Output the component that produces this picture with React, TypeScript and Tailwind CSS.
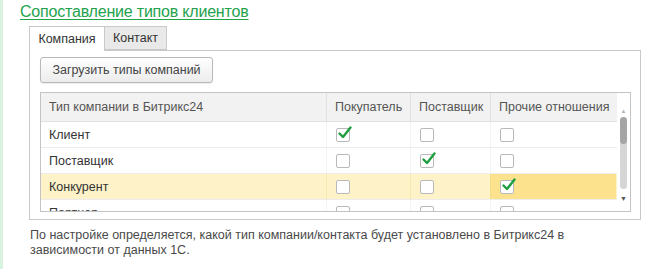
import React from "react";

type Row = { name: string; buyer: boolean; supplier: boolean; other: boolean; current?: boolean };

const rows: Row[] = [
  { name: "Клиент", buyer: true, supplier: false, other: false },
  { name: "Поставщик", buyer: false, supplier: true, other: false },
  { name: "Конкурент", buyer: false, supplier: false, other: true, current: true },
  { name: "Партнер", buyer: false, supplier: false, other: false },
];

function Check({ checked }: { checked: boolean }) {
  return (
    <div className="relative w-[14px] h-[14px] rounded-[2px] border border-[#b9b9b9] bg-white">
      {checked && (
        <svg className="absolute left-[0px] top-[-4px]" width="16" height="16" viewBox="0 0 16 16">
          <path d="M2.5 8.5 L6 12 L13.5 2.5" fill="none" stroke="#1f9e3f" strokeWidth="2.4" strokeLinecap="round" strokeLinejoin="round" />
        </svg>
      )}
    </div>
  );
}

export default function App() {
  return (
    <div className="w-[646px] h-[269px] bg-white flex overflow-hidden" style={{ fontFamily: '"Liberation Sans", Arial, sans-serif' }}>
      {/* left accent stripe */}
      <div className="w-[3px] h-full bg-[#d9f2e2]" />

      <div className="flex-1 pl-[17px] pt-[3px]">
        <div className="text-[16px] leading-[18px] text-[#23a24d] underline underline-offset-[2px] decoration-[#23a24d] tracking-[-0.2px]">
          Сопоставление типов клиентов
        </div>

        <div className="ml-[9px] mt-[5px] w-[612px]">
          {/* Tabs */}
          <div className="flex h-[24px] relative z-10">
            <div className="w-[76px] h-[25px] border border-[#c9c9c9] border-b-0 bg-white text-[12.5px] text-[#333] flex items-center justify-center">
              Компания
            </div>
            <div className="w-[62px] h-[24px] border border-[#c9c9c9] border-l-0 bg-[#e9e9e9] text-[12.5px] text-[#333] flex items-center justify-center">
              Контакт
            </div>
          </div>

          {/* Tab panel */}
          <div className="h-[170px] border border-[#c9c9c9] pl-[10px] pr-[9px] pt-[6px]">
            <button className="h-[26px] w-[173px] rounded-[3px] border border-[#b9b9b9] bg-gradient-to-b from-white to-[#ececec] text-[12.5px] text-[#444] shadow-[0_1px_1px_rgba(0,0,0,0.08)]">
              Загрузить типы компаний
            </button>

            {/* Table */}
            <div className="mt-[9px] h-[120px] border border-[#c4c4c4] flex overflow-hidden">
              <div className="flex-1 flex flex-col">
                <div className="grid grid-cols-[285px_84px_80px_126px] h-[29px] bg-[#f2f2f2] border-b border-[#e2e2e2] text-[12.5px] text-[#555] shrink-0">
                  <div className="pl-[8px] flex items-center">Тип компании в Битрикс24</div>
                  <div className="pl-[8px] flex items-center border-l border-[#e0e0e0]">Покупатель</div>
                  <div className="pl-[8px] flex items-center border-l border-[#e0e0e0]">Поставщик</div>
                  <div className="pl-[8px] flex items-center border-l border-[#e0e0e0]">Прочие отношения</div>
                </div>
                {rows.map((r) => (
                  <div
                    key={r.name}
                    className={`grid grid-cols-[285px_84px_80px_126px] h-[26px] shrink-0 border-b border-[#ececec] text-[12.5px] text-[#333] ${
                      r.current ? "bg-[#fdf2c8]" : "bg-white"
                    }`}
                  >
                    <div className="pl-[8px] flex items-center">{r.name}</div>
                    <div className={`pl-[9px] flex items-center border-l ${r.current ? "border-[#f7e7b0]" : "border-[#f3f3f3]"}`}>
                      <Check checked={r.buyer} />
                    </div>
                    <div className={`pl-[9px] flex items-center border-l ${r.current ? "border-[#f7e7b0]" : "border-[#f3f3f3]"}`}>
                      <Check checked={r.supplier} />
                    </div>
                    <div className={`pl-[9px] flex items-center border-l ${r.current ? "border-[#f5dc8a] bg-[#fde28e]" : "border-[#f3f3f3]"}`}>
                      <Check checked={r.other} />
                    </div>
                  </div>
                ))}
              </div>

              {/* Scrollbar */}
              <div className="w-[13px] flex flex-col items-center bg-white">
                <div className="h-[23px] flex items-end justify-center text-[6px] leading-none text-[#b5b5b5] pb-[2px]">▲</div>
                <div className="w-[7px] h-[72px] rounded-[4px] bg-[#d6d6d6] mt-[1px] relative">
                  <div className="absolute left-0 top-0 w-[7px] h-[27px] rounded-[4px] bg-[#a5a5a5]" />
                </div>
                <div className="mt-[6px] text-[7px] leading-none text-[#555]">▼</div>
              </div>
            </div>
          </div>

          <div className="mt-[8px] text-[12.5px] leading-[15px] text-[#4a4a4a] pl-[1px]">
            По настройке определяется, какой тип компании/контакта будет установлено в Битрикс24 в
            <br />
            зависимости от данных 1С.
          </div>
        </div>
      </div>
    </div>
  );
}
